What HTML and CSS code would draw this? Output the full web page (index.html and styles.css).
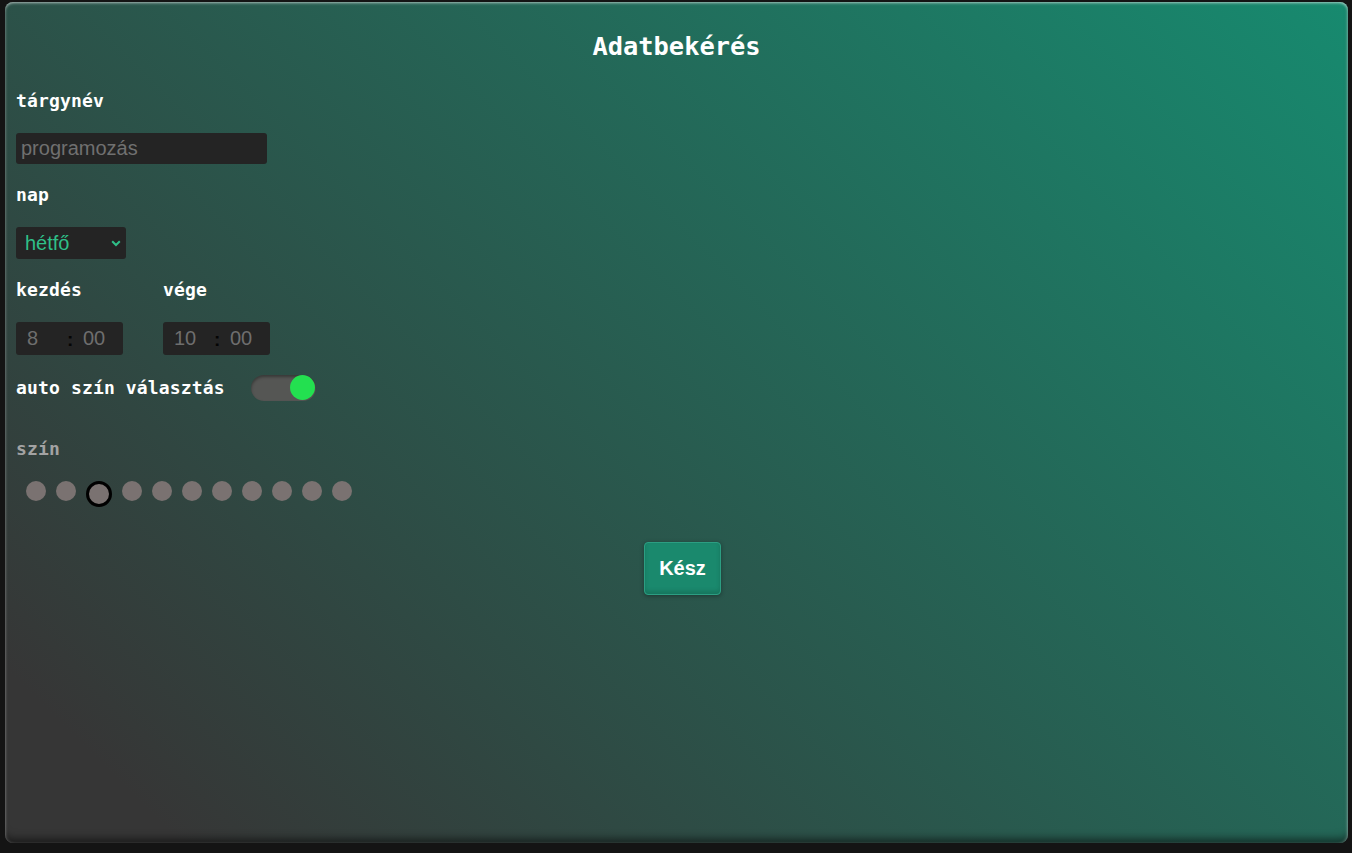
FILE: index.html
```html
<!DOCTYPE html>
<html lang="hu">
<head>
<meta charset="utf-8">
<title>Adatbekérés</title>
<link rel="stylesheet" href="styles.css">
</head>
<body>
<div class="panel">
  <h1 class="title">Adatbekérés</h1>

  <div class="label">tárgynév</div>
  <input class="text-input" type="text" placeholder="programozás">

  <div class="label gap20">nap</div>
  <div class="select">
    <span class="select-value">hétfő</span>
    <svg class="chevron" width="10" height="7" viewBox="0 0 10 7"><path d="M1.2 1.3 L5 5 L8.8 1.3" fill="none" stroke="#2fbf88" stroke-width="2"/></svg>
  </div>

  <div class="time-row">
    <div class="time-col">
      <div class="label">kezdés</div>
      <div class="time-box">
        <span class="hh">8</span><span class="colon">:</span><span class="mm">00</span>
      </div>
    </div>
    <div class="time-col">
      <div class="label">vége</div>
      <div class="time-box">
        <span class="hh">10</span><span class="colon">:</span><span class="mm">00</span>
      </div>
    </div>
  </div>

  <div class="toggle-row">
    <div class="label">auto szín választás</div>
    <div class="toggle"><span class="knob"></span></div>
  </div>

  <div class="label muted szin">szín</div>
  <div class="dots">
    <span class="dot"></span>
    <span class="dot"></span>
    <span class="dot selected"></span>
    <span class="dot"></span>
    <span class="dot"></span>
    <span class="dot"></span>
    <span class="dot"></span>
    <span class="dot"></span>
    <span class="dot"></span>
    <span class="dot"></span>
    <span class="dot"></span>
  </div>

  <div class="actions">
    <button class="btn" type="button">Kész</button>
  </div>
</div>
</body>
</html>
```

FILE: styles.css
```css
* { box-sizing: border-box; }

html, body {
  margin: 0;
  height: 100%;
  background: #141414;
}

body {
  padding: 2px 4px 10px 5px;
}

.panel {
  height: 841px;
  border-radius: 8px;
  background: linear-gradient(45deg, #363636 0%, #363636 8%, #178a6f 100%);
  box-shadow:
    inset 0 2px 3px -1px rgba(255, 255, 255, 0.55),
    inset 2px 0 3px -1px rgba(255, 255, 255, 0.18),
    inset -2px 0 3px -1px rgba(255, 255, 255, 0.3),
    inset 0 -9px 8px -5px rgba(0, 0, 0, 0.55);
  padding: 29px 11px 0 11px;
  font-family: "DejaVu Sans Mono", "Liberation Mono", monospace;
  color: #ffffff;
}

.title {
  margin: 0;
  height: 30px;
  line-height: 30px;
  font-size: 25.4px;
  font-weight: bold;
  text-align: center;
  margin-bottom: 29px;
}

.label {
  height: 22px;
  line-height: 22px;
  font-size: 18px;
  letter-spacing: 0.15px;
  font-weight: bold;
  white-space: nowrap;
}

.gap20 { margin-top: 20px; }

.muted { color: #a3a3a3; }

.text-input {
  display: block;
  margin: 21px 0 0 0;
  width: 251px;
  height: 31px;
  border: none;
  border-radius: 3px;
  background: #242424;
  padding: 0 5px;
  font-family: "Liberation Sans", Arial, sans-serif;
  font-size: 20px;
  color: #cccccc;
  outline: none;
}
.text-input::placeholder { color: #707070; }

.select {
  margin-top: 21px;
  width: 110px;
  height: 32px;
  border-radius: 3px;
  background: #242424;
  display: flex;
  align-items: center;
  justify-content: space-between;
  padding: 0 5px 0 9px;
  font-family: "Liberation Sans", Arial, sans-serif;
  font-size: 20px;
  color: #2fbf88;
}
.chevron { display: block; margin-top: 1px; }

.time-row {
  display: flex;
  margin-top: 20px;
}
.time-col { width: 147px; }

.time-box {
  margin-top: 21px;
  width: 107px;
  height: 33px;
  border-radius: 3px;
  background: #242424;
  display: flex;
  align-items: center;
  padding-left: 11px;
  font-family: "Liberation Sans", Arial, sans-serif;
  font-size: 20px;
  color: #6e6e6e;
}
.hh { width: 40px; }
.colon {
  width: 16px;
  color: #050505;
  font-weight: bold;
  font-size: 19px;
  margin-top: 2px;
}

.toggle-row {
  margin-top: 19px;
  height: 27px;
  display: flex;
  align-items: center;
  gap: 26px;
}

.toggle {
  position: relative;
  width: 65px;
  height: 26px;
  border-radius: 13px;
  background: #555654;
  box-shadow: inset 0 2px 3px rgba(0, 0, 0, 0.35);
}
.knob {
  position: absolute;
  right: 1px;
  top: 0;
  width: 25px;
  height: 25px;
  border-radius: 50%;
  background: #23e050;
}

.szin { margin-top: 37px; }

.dots {
  margin-top: 21px;
  display: flex;
  align-items: flex-start;
  padding-left: 5px;
  height: 26px;
}
.dot {
  width: 20px;
  height: 20px;
  margin: 0 5px;
  border-radius: 50%;
  background: #7a7271;
}
.dot.selected {
  width: 26px;
  height: 26px;
  border: 3px solid #000000;
}

.actions {
  margin-top: 35px;
  display: flex;
  justify-content: center;
}

.btn {
  margin-left: 12px;
  width: 77px;
  height: 53px;
  border: 1px solid #2c9e82;
  border-radius: 4px;
  background: #1a896d;
  box-shadow: 0 1px 4px rgba(0, 0, 0, 0.35), inset 0 -3px 4px rgba(0, 0, 0, 0.15);
  color: #ffffff;
  font-family: "Liberation Sans", Arial, sans-serif;
  font-size: 20px;
  font-weight: bold;
  padding: 0;
}
```
